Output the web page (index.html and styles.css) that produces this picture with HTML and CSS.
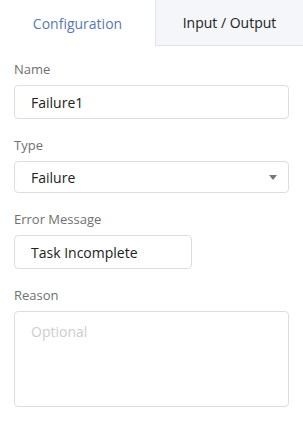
FILE: index.html
```html
<!DOCTYPE html>
<html>
<head>
<meta charset="utf-8">
<link rel="stylesheet" href="styles.css">
</head>
<body>
<div class="panel">
  <div class="tabs">
    <div class="tab active">Configuration</div>
    <div class="tab">Input / Output</div>
  </div>
  <form class="form">
    <div class="field">
      <label class="label">Name</label>
      <div class="input full">Failure1</div>
    </div>
    <div class="field">
      <label class="label">Type</label>
      <div class="input full select">
        <span>Failure</span>
        <svg class="caret" width="8" height="5" viewBox="0 0 8 5"><path d="M0 0H8L4 5Z" fill="#777"/></svg>
      </div>
    </div>
    <div class="field">
      <label class="label">Error Message</label>
      <div class="input short">Task Incomplete</div>
    </div>
    <div class="field">
      <label class="label">Reason</label>
      <div class="input full area"><span class="ph">Optional</span></div>
    </div>
  </form>
</div>
</body>
</html>
```
FILE: styles.css
```css
* { box-sizing: border-box; }
html, body { margin: 0; padding: 0; background: #fff; }
body { font-family: "Open Sans", "Liberation Sans", sans-serif; color: #222; }
.panel { width: 303px; height: 423px; }
.tabs { display: flex; height: 46px; }
.tab { display: flex; align-items: center; justify-content: center; font-size: 14px; }
.tab.active { width: 155px; color: #5a78b3; background: #fff; }
.tab:not(.active) { flex: 1; background: #f4f6fa; border-left: 1px solid #e3e5ea; border-bottom: 1px solid #e3e5ea; color: #222; }
.form { padding: 14px 14px 0 14px; display: flex; flex-direction: column; gap: 17px; }
.field { display: flex; flex-direction: column; gap: 7px; }
.label { font-size: 13px; color: #707070; line-height: 18px; }
.input { height: 34px; border: 1px solid #dedede; border-radius: 4px; padding: 0 16px; display: flex; align-items: center; font-size: 14px; color: #222; }
.input.full { width: 275px; }
.input.short { width: 178px; height: 34px; }
.select { justify-content: space-between; padding-right: 11px; height: 32px; }
.area { height: 96px; align-items: flex-start; padding-top: 10px; }
.ph { color: #cdcdcd; }
```
